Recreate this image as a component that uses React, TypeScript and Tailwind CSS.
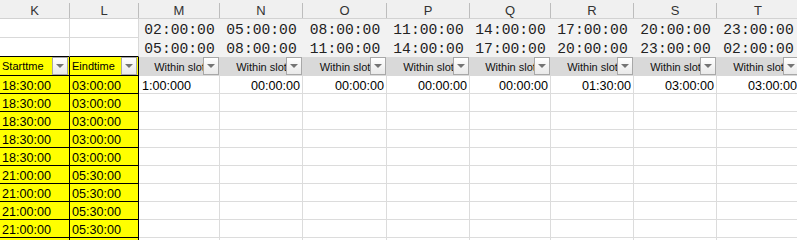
import React from 'react';

const W = ['w-[70px]', 'w-[69px]', 'w-[81px]', 'w-[83px]', 'w-[84px]', 'w-[83px]', 'w-[81px]', 'w-[83px]', 'w-[83px]', 'w-[83px]'];
const LETTERS = ['K', 'L', 'M', 'N', 'O', 'P', 'Q', 'R', 'S', 'T'];
const FROM = ['02:00:00', '05:00:00', '08:00:00', '11:00:00', '14:00:00', '17:00:00', '20:00:00', '23:00:00'];
const TO = ['05:00:00', '08:00:00', '11:00:00', '14:00:00', '17:00:00', '20:00:00', '23:00:00', '02:00:00'];
const FIRST = ['1:00:000', '00:00:00', '00:00:00', '00:00:00', '00:00:00', '01:30:00', '03:00:00', '03:00:00'];
const ROWS = [
    ['18:30:00', '03:00:00'],
    ['18:30:00', '03:00:00'],
    ['18:30:00', '03:00:00'],
    ['18:30:00', '03:00:00'],
    ['18:30:00', '03:00:00'],
    ['21:00:00', '05:30:00'],
    ['21:00:00', '05:30:00'],
    ['21:00:00', '05:30:00'],
    ['21:00:00', '05:30:00'],
    ['21:00:00', '05:30:00'],
];

const FilterButton = () => (
    <div className="absolute right-[1px] top-0 w-[16px] h-[18px] border border-[#a8a8a8] bg-gradient-to-b from-white to-[#e9e9e9] flex items-center justify-center">
        <svg width="8" height="4" viewBox="0 0 8 4"><path d="M0 0h8L4 4z" fill="#747474" /></svg>
    </div>
);

export default function App() {
    return (
        <div className="w-[797px] h-[240px] overflow-hidden bg-white font-['Liberation_Sans',Arial,sans-serif] text-black">
            {/* column letters */}
            <div className="flex h-[19px] bg-[#f0f0f0] border-b border-[#d2d2d2]">
                {LETTERS.map((l, i) => (
                    <div key={l} className={`${W[i]} shrink-0 flex`}>
                        <div className="flex-1 text-center pt-[3px] leading-[15px] text-[13px] text-[#333]">{l}</div>
                        <div className="w-px mt-[3px] bg-[#bdbdbd]" />
                    </div>
                ))}
            </div>

            {/* slot from / to */}
            {[FROM, TO].map((row, r) => (
                <div key={r} className="flex h-[19px]">
                    <div className={`${W[0]} shrink-0 border-r border-b ${r === 1 ? 'border-b-black' : ''} border-r-[#d9d9d9] border-b-[#d9d9d9]`} />
                    <div className={`${W[1]} shrink-0 border-r border-b ${r === 1 ? 'border-b-black' : ''} border-r-[#d9d9d9] border-b-[#d9d9d9]`} />
                    {row.map((t, i) => (
                        <div key={i} className={`${W[i + 2]} shrink-0 bg-[#f2f2f2] flex items-end justify-center font-['Liberation_Mono',monospace] text-[14.67px] leading-[16px] text-[#222]`}>{t}</div>
                    ))}
                </div>
            ))}

            {/* filter row */}
            <div className="flex h-[19px] text-[11px]">
                {['Starttme', 'Eindtime'].map((t, i) => (
                    <div key={t} className={`${W[i]} shrink-0 relative bg-[#ffff00] border-r border-b border-black flex items-center pl-[2px] leading-[18px]`}>
                        {t}
                        <FilterButton />
                    </div>
                ))}
                {FROM.map((_, i) => (
                    <div key={i} className={`${W[i + 2]} shrink-0 relative overflow-hidden bg-[#d9d9d9] flex items-center justify-center whitespace-nowrap leading-[18px] text-[#111]`}>
                        Within slot
                        <FilterButton />
                    </div>
                ))}
            </div>

            {/* data */}
            {ROWS.map(([s, e], r) => (
                <div key={r} className="flex h-[18px] text-[12.6px] leading-[14px]">
                    <div className={`${W[0]} shrink-0 bg-[#ffff00] border-r border-b border-black flex items-end pl-[2px]`}>{s}</div>
                    <div className={`${W[1]} shrink-0 bg-[#ffff00] border-r border-b border-black flex items-end pl-[2px]`}>{e}</div>
                    {FIRST.map((v, i) => (
                        <div key={i} className={`${W[i + 2]} shrink-0 border-r border-b border-[#dcdcdc] flex items-end ${i === 0 ? 'pl-[3px]' : 'justify-end pr-[2px]'}`}>
                            {r === 0 ? v : ''}
                        </div>
                    ))}
                </div>
            ))}
        </div>
    );
}
